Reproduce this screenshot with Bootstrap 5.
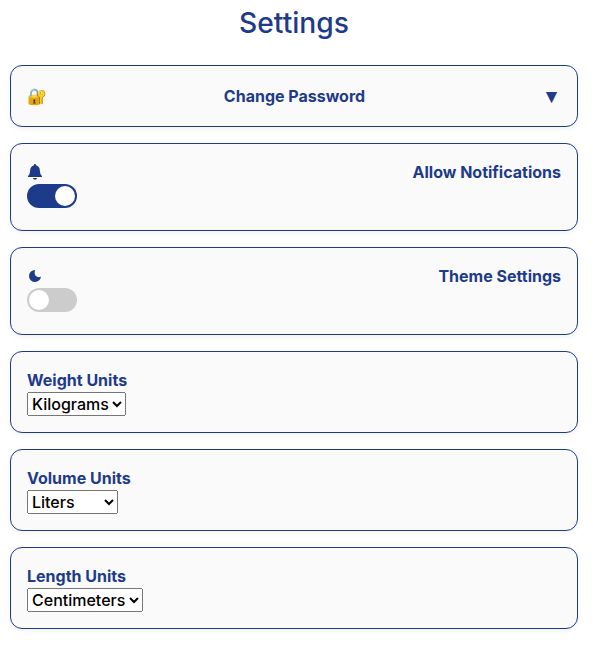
<!DOCTYPE html>
<html lang="en"><head><meta charset="utf-8"><title>Settings</title>
<link href="https://cdn.jsdelivr.net/npm/bootstrap@5.3.0/dist/css/bootstrap.min.css" rel="stylesheet">
<style>
body{font-family:Inter,sans-serif;color:#000;background:#fff}
.settings-page{padding:4px 16px 0 10px}
h1{color:#1e3a8a;font-size:28.2px;line-height:38px;margin-bottom:23px;font-weight:500}
.setting{background:#fafafa;border:1px solid #1e3a8a;border-radius:12px;padding:16px;margin-bottom:16px;box-shadow:0 2px 5px rgba(0,0,0,.05);color:#1e3a8a}
.setting-title{font-weight:700;line-height:24px}
.arrow{font-family:"Liberation Sans",sans-serif;font-size:19.2px;line-height:24px;padding-top:2px}
.tall{height:88px}.unit{height:82px}.pw{height:62px}
.toggle{width:50px;height:24px;border-radius:24px;background:#ccc;padding:2px}
.toggle span{width:20px;height:20px;border-radius:50%;background:#fff}
.toggle.on{background:#1e3a8a}
.setting select{font-size:16px;font-weight:500;height:24px}
</style></head><body>
<main class="settings-page">
<h1 class="text-center">Settings</h1>
<section class="setting pw d-flex justify-content-between align-items-center"><span>🔐</span><span class="setting-title">Change Password</span><span class="arrow">▼</span></section>
<section class="setting tall"><div class="d-flex justify-content-between align-items-center"><svg width="16" height="16" viewBox="0 0 16 16" fill="currentColor"><path d="M6 14h4a2 1.800 0 0 1-4 0M8 0c.6 0 1 .4 1 1v.3c2.300.6 3.600 2.300 3.800 4.700.2 3 .7 4.700 2.200 6V13H1v-1c1.500-1.300 2-3 2.200-6 .2-2.400 1.500-4.100 3.800-4.700V1c0-.6.4-1 1-1"/></svg><span class="setting-title">Allow Notifications</span></div><div class="toggle on d-flex justify-content-end"><span></span></div></section>
<section class="setting tall"><div class="d-flex justify-content-between align-items-center"><svg width="16" height="16" viewBox="0 0 16 16" fill="currentColor"><path d="M8.300 2a6 6 0 1 0 5.700 6.500c-1 .6-2.200.8-3.300.5C8 8.300 6.700 5 8.300 2"/></svg><span class="setting-title">Theme Settings</span></div><div class="toggle d-flex"><span></span></div></section>
<section class="setting unit"><div class="setting-title">Weight Units</div><select class="d-block"><option>Kilograms</option><option>Pounds</option></select></section>
<section class="setting unit"><div class="setting-title">Volume Units</div><select class="d-block"><option>Liters</option><option>Milliliters</option></select></section>
<section class="setting unit"><div class="setting-title">Length Units</div><select class="d-block"><option>Centimeters</option><option>Inches</option></select></section>
</main>
<script src="https://cdn.jsdelivr.net/npm/bootstrap@5.3.0/dist/js/bootstrap.bundle.min.js"></script>
</body></html>
